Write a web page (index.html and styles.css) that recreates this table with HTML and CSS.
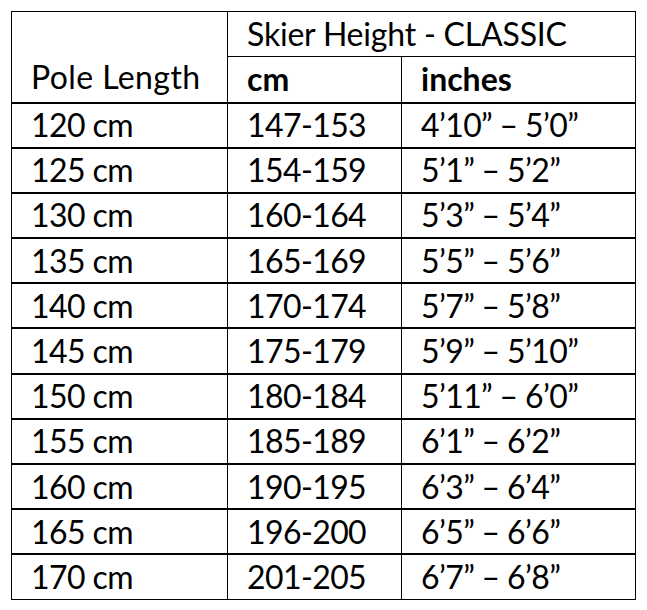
FILE: index.html
```html
<!DOCTYPE html>
<html>
<head>
<meta charset="utf-8">
<link rel="stylesheet" href="styles.css">
</head>
<body>
<table class="chart">
  <colgroup>
    <col class="c1">
    <col class="c2">
    <col class="c3">
  </colgroup>
  <thead>
    <tr class="h1">
      <td class="pole" rowspan="2">Pole Length</td>
      <td class="group" colspan="2">Skier Height - CLASSIC</td>
    </tr>
    <tr class="h2">
      <td class="unit">cm</td>
      <td class="unit">inches</td>
    </tr>
  </thead>
  <tbody>
    <tr><td>120 cm</td><td>147-153</td><td>4’10” – 5’0”</td></tr>
    <tr><td>125 cm</td><td>154-159</td><td>5’1” – 5’2”</td></tr>
    <tr><td>130 cm</td><td>160-164</td><td>5’3” – 5’4”</td></tr>
    <tr><td>135 cm</td><td>165-169</td><td>5’5” – 5’6”</td></tr>
    <tr><td>140 cm</td><td>170-174</td><td>5’7” – 5’8”</td></tr>
    <tr><td>145 cm</td><td>175-179</td><td>5’9” – 5’10”</td></tr>
    <tr><td>150 cm</td><td>180-184</td><td>5’11” – 6’0”</td></tr>
    <tr><td>155 cm</td><td>185-189</td><td>6’1” – 6’2”</td></tr>
    <tr><td>160 cm</td><td>190-195</td><td>6’3” – 6’4”</td></tr>
    <tr><td>165 cm</td><td>196-200</td><td>6’5” – 6’6”</td></tr>
    <tr><td>170 cm</td><td>201-205</td><td>6’7” – 6’8”</td></tr>
  </tbody>
</table>
</body>
</html>
```

FILE: styles.css
```css
html, body {
  margin: 0;
  padding: 0;
  background: #fff;
}

.chart {
  border-collapse: collapse;
  margin: 11px 0 0 11px;
  font-family: Lato, "Open Sans", sans-serif;
  font-size: 32px;
  color: #000;
  table-layout: fixed;
  width: 624px;
}

.c1 { width: 216px; }
.c2 { width: 174px; }
.c3 { width: 234px; }

.chart td {
  border: 1px solid #000;
  padding: 0 0 0 19px;
  line-height: 1;
  vertical-align: middle;
  white-space: nowrap;
}

.chart tr.h1 { height: 45px; }
.chart tr.h2 { height: 46px; }
.chart tr.h2 td { border-bottom: 2px solid #000; }

.chart td.group { letter-spacing: -0.2px; }

.chart td.pole {
  vertical-align: bottom;
  padding-bottom: 9px;
  border-bottom: 2px solid #000;
  letter-spacing: 0.4px;
}

.chart td.unit { font-weight: bold; }

.chart tbody tr { height: 45.2px; }
.chart tbody td {
  border-bottom: 2px solid #000;
  letter-spacing: -0.6px;
}
.chart tbody tr:last-child td { border-bottom: 1px solid #000; }
```
